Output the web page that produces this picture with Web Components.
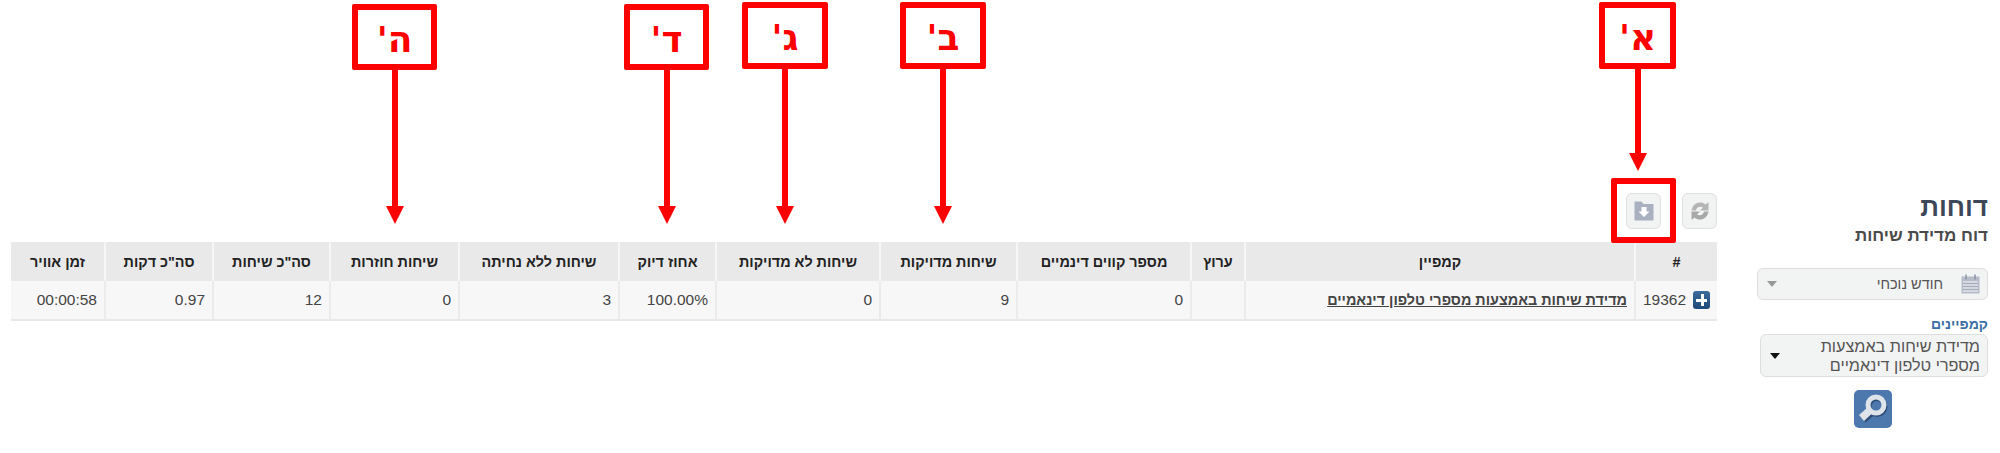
<!DOCTYPE html>
<html lang="he" dir="rtl">
<head>
<meta charset="utf-8">
<title>דוחות</title>
<style>
  html, body { margin: 0; background: #fff; }
  body { font-family: "Liberation Sans", Arial, sans-serif; }
</style>
</head>
<body>
<report-page>
  <report-sidebar slot="side" title-text="דוחות" sub-text="דוח מדידת שיחות"></report-sidebar>
  <report-toolbar slot="main"></report-toolbar>
  <report-table slot="main"></report-table>
  <note-callout slot="notes" label="א'" x="1599" y="2" w="77" h="67" stem="84"></note-callout>
  <note-callout slot="notes" label="ב'" x="900" y="2" w="86" h="67" stem="137"></note-callout>
  <note-callout slot="notes" label="ג'" x="742" y="2" w="86" h="67" stem="137"></note-callout>
  <note-callout slot="notes" label="ד'" x="624" y="4" w="85" h="66" stem="136"></note-callout>
  <note-callout slot="notes" label="ה'" x="352" y="4" w="85" h="66" stem="136"></note-callout>
  <note-frame slot="notes"></note-frame>
</report-page>

<script>
(function () {
  const COLUMNS = [
    { title: "#", width: 82 },
    { title: "קמפיין", width: 390 },
    { title: "ערוץ", width: 54 },
    { title: "מספר קווים דינמיים", width: 174 },
    { title: "שיחות מדויקות", width: 137 },
    { title: "שיחות לא מדויקות", width: 164 },
    { title: "אחוז דיוק", width: 97 },
    { title: "שיחות ללא נחיתה", width: 160 },
    { title: "שיחות חוזרות", width: 129 },
    { title: 'סה"כ שיחות', width: 117 },
    { title: 'סה"כ דקות', width: 108 },
    { title: "זמן אוויר", width: 94 },
  ];

  const ROW = ["", "", "", "0", "9", "0", "100.00%", "3", "0", "12", "0.97", "00:00:58"];

  class ReportPage extends HTMLElement {
    constructor() {
      super();
      this.attachShadow({ mode: "open" });
      this.shadowRoot.innerHTML = `
        <style>
          :host {
            display: flex;
            position: relative;
            direction: rtl;
            height: 453px;
            overflow: hidden;
          }
          .side { display: block; flex: 0 0 283px; }
          .main {
            flex: 0 0 1706px;
            padding-top: 193px;
            box-sizing: border-box;
          }
        </style>
        <div class="side"><slot name="side"></slot></div>
        <div class="main"><slot name="main"></slot></div>
        <slot name="notes"></slot>
      `;
    }
  }

  class ReportSidebar extends HTMLElement {
    constructor() {
      super();
      this.attachShadow({ mode: "open" });
      this.shadowRoot.innerHTML = `
        <style>
          :host {
            display: block;
            box-sizing: border-box;
            height: 100%;
            padding: 193px 12px 0 40px;
          }
          h1 {
            margin: 0;
            font: bold 26px/28px "Liberation Sans", Arial, sans-serif;
            color: #3d4757;
          }
          h2 {
            margin: 5px 0 22px;
            font: bold 17px/20px "Liberation Sans", Arial, sans-serif;
            color: #4a4a4a;
          }
          .range {
            display: flex;
            align-items: center;
            box-sizing: border-box;
            height: 32px;
            padding: 0 7px 0 9px;
            gap: 18px;
            background: #f2f3f3;
            border: 1.5px solid #dedede;
            border-radius: 6px;
            font-size: 14.500px;
            color: #555;
          }
          .range span { flex: 1; }
          .caret {
            width: 0;
            height: 0;
            border: 5px solid transparent;
            border-bottom: 0;
            border-top: 6px solid #999;
          }
          label {
            display: block;
            margin: 16px 0 1px;
            font: bold 14px/17px "Liberation Sans", Arial, sans-serif;
            color: #3c6ea6;
          }
          .campaign {
            display: flex;
            align-items: center;
            box-sizing: border-box;
            height: 43px;
            margin-left: 3px;
            padding: 0 7px 0 9px;
            background: #f2f3f3;
            border: 1.5px solid #dedede;
            border-radius: 6px;
            font-size: 16.200px;
            line-height: 19px;
            color: #555;
          }
          .campaign span { flex: 1; }
          .campaign .caret { border-top-color: #111; }
          .go {
            display: block;
            width: 38px;
            height: 38px;
            margin: 13px auto 0;
            padding: 0;
            border: 0;
            border-radius: 5px;
            background: #4c78ad;
          }
          svg { display: block; }
        </style>
        <h1>${this.getAttribute("title-text")}</h1>
        <h2>${this.getAttribute("sub-text")}</h2>
        <div class="range">
          <svg width="19" height="20" viewBox="0 0 19 20">
            <rect x="0.5" y="2.5" width="18" height="17" fill="#b6bcca"/>
            <rect x="2" y="7" width="15" height="11" fill="#d5d8e0"/>
            <path d="M2 9.5h15M2 12.5h15M2 15.5h15" stroke="#a3aaba" stroke-width="1"/>
            <path d="M5 0.5v5M14 0.5v5" stroke="#8f97a8" stroke-width="1.6"/>
          </svg>
          <span>חודש נוכחי</span>
          <i class="caret"></i>
        </div>
        <label>קמפיינים</label>
        <div class="campaign">
          <span>מדידת שיחות באמצעות<br>מספרי טלפון דינאמיים</span>
          <i class="caret"></i>
        </div>
        <button class="go" aria-label="חיפוש">
          <svg width="38" height="38" viewBox="0 0 38 38">
            <path d="M6.500 26l5 6.500 9-7.500-5-6z" fill="#2f4f78"/>
            <circle cx="23" cy="16.500" r="8" fill="none" stroke="#2f4f78" stroke-width="5"/>
            <path d="M5 25l5 6 8.500-8-5-5.500z" fill="#dfe4ea"/>
            <circle cx="22" cy="15" r="8" fill="none" stroke="#dfe4ea" stroke-width="5"/>
          </svg>
        </button>
      `;
    }
  }

  class ReportToolbar extends HTMLElement {
    constructor() {
      super();
      this.attachShadow({ mode: "open" });
      this.shadowRoot.innerHTML = `
        <style>
          :host {
            display: flex;
            gap: 21px;
            height: 36px;
            margin-bottom: 13px;
          }
          button {
            display: flex;
            align-items: center;
            justify-content: center;
            box-sizing: border-box;
            width: 35px;
            height: 36px;
            padding: 0;
            background: #f2f3f3;
            border: 1.5px solid #e0e0e0;
            border-radius: 6px;
          }
        </style>
        <button aria-label="רענון">
          <svg width="20" height="20" viewBox="0 0 20 20">
            <path d="M1.500 9.500C2.500 4 6.500 1 11 1.500c2 .2 3.500 1 4.500 2L18.500 1v8.500H10l3-3C12 5.800 11 5.500 9.500 5.800 7.500 6.200 6.500 7.500 6 9.500z" fill="#b5b5b5"/>
            <path d="M18.500 10.500C17.500 16 13.500 19 9 18.500c-2-.2-3.500-1-4.500-2L1.500 19v-8.500H10l-3 3c1 .7 2 1 3.500.7 2-.4 3-1.700 3.500-3.700z" fill="#a8a8a8"/>
          </svg>
        </button>
        <button aria-label="ייצוא">
          <svg width="20" height="20" viewBox="0 0 20 20">
            <path d="M0.500 0.500h7l2 2.500h10v16.500h-19z" fill="#a9b1c0"/>
            <path d="M7.500 6h5v4.500h3L10 16l-5.500-5.500h3z" fill="#fff"/>
          </svg>
        </button>
      `;
    }
  }

  class ReportTable extends HTMLElement {
    constructor() {
      super();
      this.attachShadow({ mode: "open" });
      const cols = COLUMNS.map((c) => `<col style="width:${c.width}px">`).join("");
      const heads = COLUMNS.map((c) => `<th>${c.title}</th>`).join("");
      const cells = ROW.map((v, i) => {
        if (i === 0) {
          return `<td><div class="id"><span class="plus"></span>19362</div></td>`;
        }
        if (i === 1) {
          return `<td><a href="#">מדידת שיחות באמצעות מספרי טלפון דינאמיים</a></td>`;
        }
        return `<td>${v}</td>`;
      }).join("");
      this.shadowRoot.innerHTML = `
        <style>
          :host { display: block; width: 1706px; }
          table {
            table-layout: fixed;
            width: 1706px;
            border-collapse: collapse;
            direction: rtl;
          }
          th {
            height: 39px;
            padding: 0 4px;
            box-sizing: border-box;
            background: #e9e9e9;
            border-left: 2px solid #f6f6f6;
            font: bold 14.400px "Liberation Sans", Arial, sans-serif;
            color: #222;
            text-align: center;
          }
          td {
            height: 39px;
            padding: 0 7px;
            box-sizing: border-box;
            background: #f7f7f7;
            border-left: 2px solid #ebebeb;
            border-bottom: 2px solid #e8e8e8;
            font: 15.500px "Liberation Sans", Arial, sans-serif;
            color: #444;
            text-align: right;
          }
          th:last-child, td:last-child { border-left: 0; }
          a {
            font-size: 14.400px;
            font-weight: bold;
            color: #444;
          }
          .id { display: flex; align-items: center; gap: 7px; }
          .plus {
            position: relative;
            display: block;
            width: 18px;
            height: 18px;
            border-radius: 3px;
            background: linear-gradient(#3a6c9c, #1d4a78);
          }
          .plus::before, .plus::after {
            content: "";
            position: absolute;
            background: #fff;
          }
          .plus::before { left: 3px; right: 3px; top: 8px; height: 3px; }
          .plus::after { top: 3px; bottom: 3px; left: 8px; width: 3px; }
        </style>
        <table>
          <colgroup>${cols}</colgroup>
          <thead><tr>${heads}</tr></thead>
          <tbody><tr>${cells}</tr></tbody>
        </table>
      `;
    }
  }

  class NoteCallout extends HTMLElement {
    constructor() {
      super();
      this.attachShadow({ mode: "open" });
      const attr = (name) => this.getAttribute(name);
      this.shadowRoot.innerHTML = `
        <style>
          :host {
            display: flex;
            flex-direction: column;
            align-items: center;
            position: absolute;
            left: ${attr("x")}px;
            top: ${attr("y")}px;
            width: ${attr("w")}px;
            direction: rtl;
          }
          .box {
            display: flex;
            align-items: center;
            justify-content: center;
            box-sizing: border-box;
            width: 100%;
            height: ${attr("h")}px;
            padding-top: 4px;
            background: #fff;
            border: 6px solid #f00;
            border-radius: 2px;
            font: bold 36px "DejaVu Sans", sans-serif;
            color: #f00;
          }
          .stem { width: 6px; height: ${attr("stem")}px; background: #f00; }
          .head {
            width: 0;
            height: 0;
            border-left: 9px solid transparent;
            border-right: 9px solid transparent;
            border-top: 18px solid #f00;
          }
        </style>
        <div class="box">${attr("label")}</div>
        <div class="stem"></div>
        <div class="head"></div>
      `;
    }
  }

  class NoteFrame extends HTMLElement {
    constructor() {
      super();
      this.attachShadow({ mode: "open" });
      this.shadowRoot.innerHTML = `
        <style>
          :host {
            display: block;
            position: absolute;
            left: 1611px;
            top: 178px;
            width: 65px;
            height: 65px;
            box-sizing: border-box;
            border: 6px solid #f00;
            border-radius: 2px;
          }
        </style>
      `;
    }
  }

  window.customElements.define("report-page", ReportPage);
  window.customElements.define("report-sidebar", ReportSidebar);
  window.customElements.define("report-toolbar", ReportToolbar);
  window.customElements.define("report-table", ReportTable);
  window.customElements.define("note-callout", NoteCallout);
  window.customElements.define("note-frame", NoteFrame);
})();
</script>
</body>
</html>
